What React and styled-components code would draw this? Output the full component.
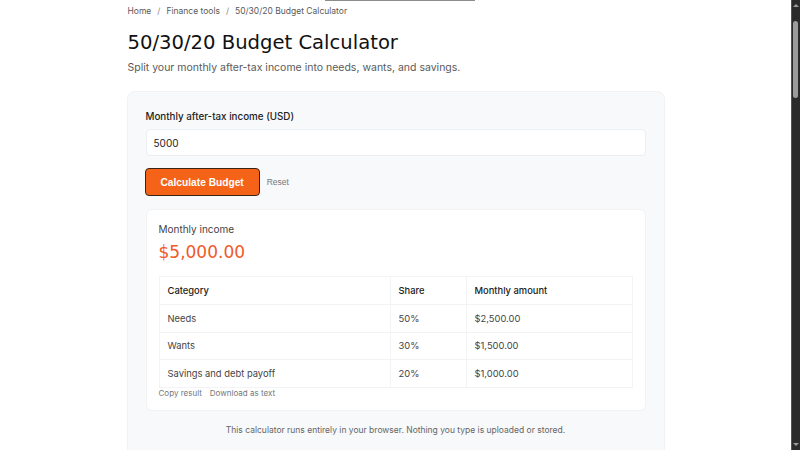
import React, { useState } from "react";
import styled, { createGlobalStyle } from "styled-components";

const GlobalStyle = createGlobalStyle`
  body {
    margin: 0;
    background: #ffffff;
    font-family: Inter, "Noto Sans", sans-serif;
    color: #1c1c1c;
  }
`;

const Page = styled.div`
  position: relative;
  padding-right: 9px;
`;

const TopBar = styled.div`
  position: absolute;
  top: 0;
  left: 325px;
  width: 150px;
  height: 1px;
  background: #8c8c8c;
`;

/* dark window scrollbar on the right edge */
const Track = styled.div`
  position: fixed;
  top: 0;
  right: 0;
  width: 9px;
  height: 100vh;
  background: #2b2b2b;
  border-left: 1px solid #555;
  box-sizing: border-box;
`;

const Thumb = styled.div`
  position: absolute;
  top: 21px;
  left: 1px;
  width: 5px;
  height: 77px;
  border-radius: 3px;
  background: #9c9c9c;
`;

const Arrow = styled.div`
  position: absolute;
  left: 1px;
  width: 0;
  height: 0;
  border-left: 3px solid transparent;
  border-right: 3px solid transparent;
  ${(p) =>
    p.$down
      ? "bottom: 4px; border-top: 3px solid #9c9c9c;"
      : "top: 4px; border-bottom: 3px solid #9c9c9c;"}
`;

const Main = styled.main`
  width: 538px;
  margin: 0 auto;
  padding-top: 5px;
`;

const Crumbs = styled.nav`
  display: flex;
  gap: 6px;
  font-size: 8.5px;
  color: #5a5a5a;
  line-height: 12px;
  padding-left: 1px;

  span.sep {
    color: #888;
  }
`;

const Title = styled.h1`
  margin: 14px 0 0;
  font-family: "DejaVu Sans", sans-serif;
  font-weight: 400;
  font-size: 19.6px;
  line-height: 24px;
  color: #111;
  padding-left: 1px;
`;

const Lead = styled.p`
  margin: 6px 0 0;
  font-size: 10.5px;
  line-height: 14px;
  color: #5a5a5a;
  padding-left: 1px;
`;

const Panel = styled.section`
  margin-top: 16px;
  background: #f7f9fb;
  border: 1px solid #f0f2f4;
  border-radius: 8px;
  padding: 18px 18px 40px;
`;

const Label = styled.label`
  display: block;
  font-size: 9.8px;
  font-weight: 500;
  color: #222;
  line-height: 13px;
`;

const Input = styled.input`
  display: block;
  box-sizing: border-box;
  width: 100%;
  height: 27px;
  margin-top: 6px;
  padding: 0 7px;
  border: 1px solid #eceff2;
  border-radius: 4px;
  background: #fff;
  font-family: Inter, sans-serif;
  font-size: 10px;
  color: #222;
  outline: none;
`;

const Actions = styled.div`
  display: flex;
  align-items: center;
  gap: 7px;
  margin-top: 12px;
  margin-left: -1px;
`;

const Primary = styled.button`
  height: 28px;
  padding: 0 15px;
  background: #f46318;
  color: #fff;
  border: 1px solid #3b2416;
  border-radius: 4px;
  font-family: "Liberation Sans", Arial, sans-serif;
  font-weight: 700;
  font-size: 10.2px;
  cursor: pointer;
`;

const LinkButton = styled.button`
  background: none;
  border: none;
  padding: 0;
  font-family: ${(p) => (p.$arial ? '"Liberation Sans", Arial, sans-serif' : "Inter, sans-serif")};
  font-size: ${(p) => (p.$arial ? "8.5px" : "8px")};
  line-height: 10px;
  color: #777;
  cursor: pointer;
`;

const Result = styled.div`
  margin-top: 13px;
  background: #fff;
  border: 1px solid #f0f2f4;
  border-radius: 6px;
  padding: 13px 12px 12px;
`;

const Caption = styled.div`
  font-size: 10px;
  color: #444;
  line-height: 13px;
`;

const Amount = styled.div`
  margin-top: 5px;
  font-family: "DejaVu Sans", sans-serif;
  font-size: 17px;
  line-height: 22px;
  color: #f05a28;
`;

const Table = styled.table`
  margin-top: 13px;
  width: 100%;
  border-collapse: collapse;
  border: 1px solid #f3f4f6;
  font-size: 9.4px;
  color: #444;

  th,
  td {
    text-align: left;
    height: 26.5px;
    padding: 0 8px;
    border-bottom: 1px solid #f2f3f5;
  }
  th {
    height: 27px;
    font-weight: 500;
    color: #222;
  }
  th + th,
  td + td {
    border-left: 1px solid #f2f3f5;
  }
`;

const Col = styled.col`
  width: ${(p) => p.$w};
`;

const Tools = styled.div`
  display: flex;
  gap: 8px;
`;

const Note = styled.p`
  margin: 13px 0 0;
  text-align: center;
  font-size: 8.5px;
  line-height: 12px;
  color: #666;
`;

const rows = [
  ["Needs", 0.5],
  ["Wants", 0.3],
  ["Savings and debt payoff", 0.2],
];

const money = (n) =>
  "$" + n.toLocaleString("en-US", { minimumFractionDigits: 2, maximumFractionDigits: 2 });

export default function App() {
  const [income, setIncome] = useState("5000");
  const [total, setTotal] = useState(5000);

  return (
    <Page>
      <GlobalStyle />
      <TopBar />
      <Track>
        <Arrow />
        <Thumb />
        <Arrow $down />
      </Track>
      <Main>
        <Crumbs>
          <span>Home</span>
          <span className="sep">/</span>
          <span>Finance tools</span>
          <span className="sep">/</span>
          <span>50/30/20 Budget Calculator</span>
        </Crumbs>
        <Title>50/30/20 Budget Calculator</Title>
        <Lead>Split your monthly after-tax income into needs, wants, and savings.</Lead>

        <Panel>
          <Label htmlFor="income">Monthly after-tax income (USD)</Label>
          <Input id="income" value={income} onChange={(e) => setIncome(e.target.value)} />
          <Actions>
            <Primary onClick={() => setTotal(parseFloat(income) || 0)}>Calculate Budget</Primary>
            <LinkButton $arial onClick={() => setIncome("")}>
              Reset
            </LinkButton>
          </Actions>

          <Result>
            <Caption>Monthly income</Caption>
            <Amount>{money(total)}</Amount>
            <Table>
              <colgroup>
                <Col $w="231px" />
                <Col $w="76px" />
                <Col />
              </colgroup>
              <thead>
                <tr>
                  <th>Category</th>
                  <th>Share</th>
                  <th>Monthly amount</th>
                </tr>
              </thead>
              <tbody>
                {rows.map(([name, share]) => (
                  <tr key={name}>
                    <td>{name}</td>
                    <td>{Math.round(share * 100)}%</td>
                    <td>{money(total * share)}</td>
                  </tr>
                ))}
              </tbody>
            </Table>
            <Tools>
              <LinkButton>Copy result</LinkButton>
              <LinkButton>Download as text</LinkButton>
            </Tools>
          </Result>

          <Note>This calculator runs entirely in your browser. Nothing you type is uploaded or stored.</Note>
        </Panel>
      </Main>
    </Page>
  );
}
